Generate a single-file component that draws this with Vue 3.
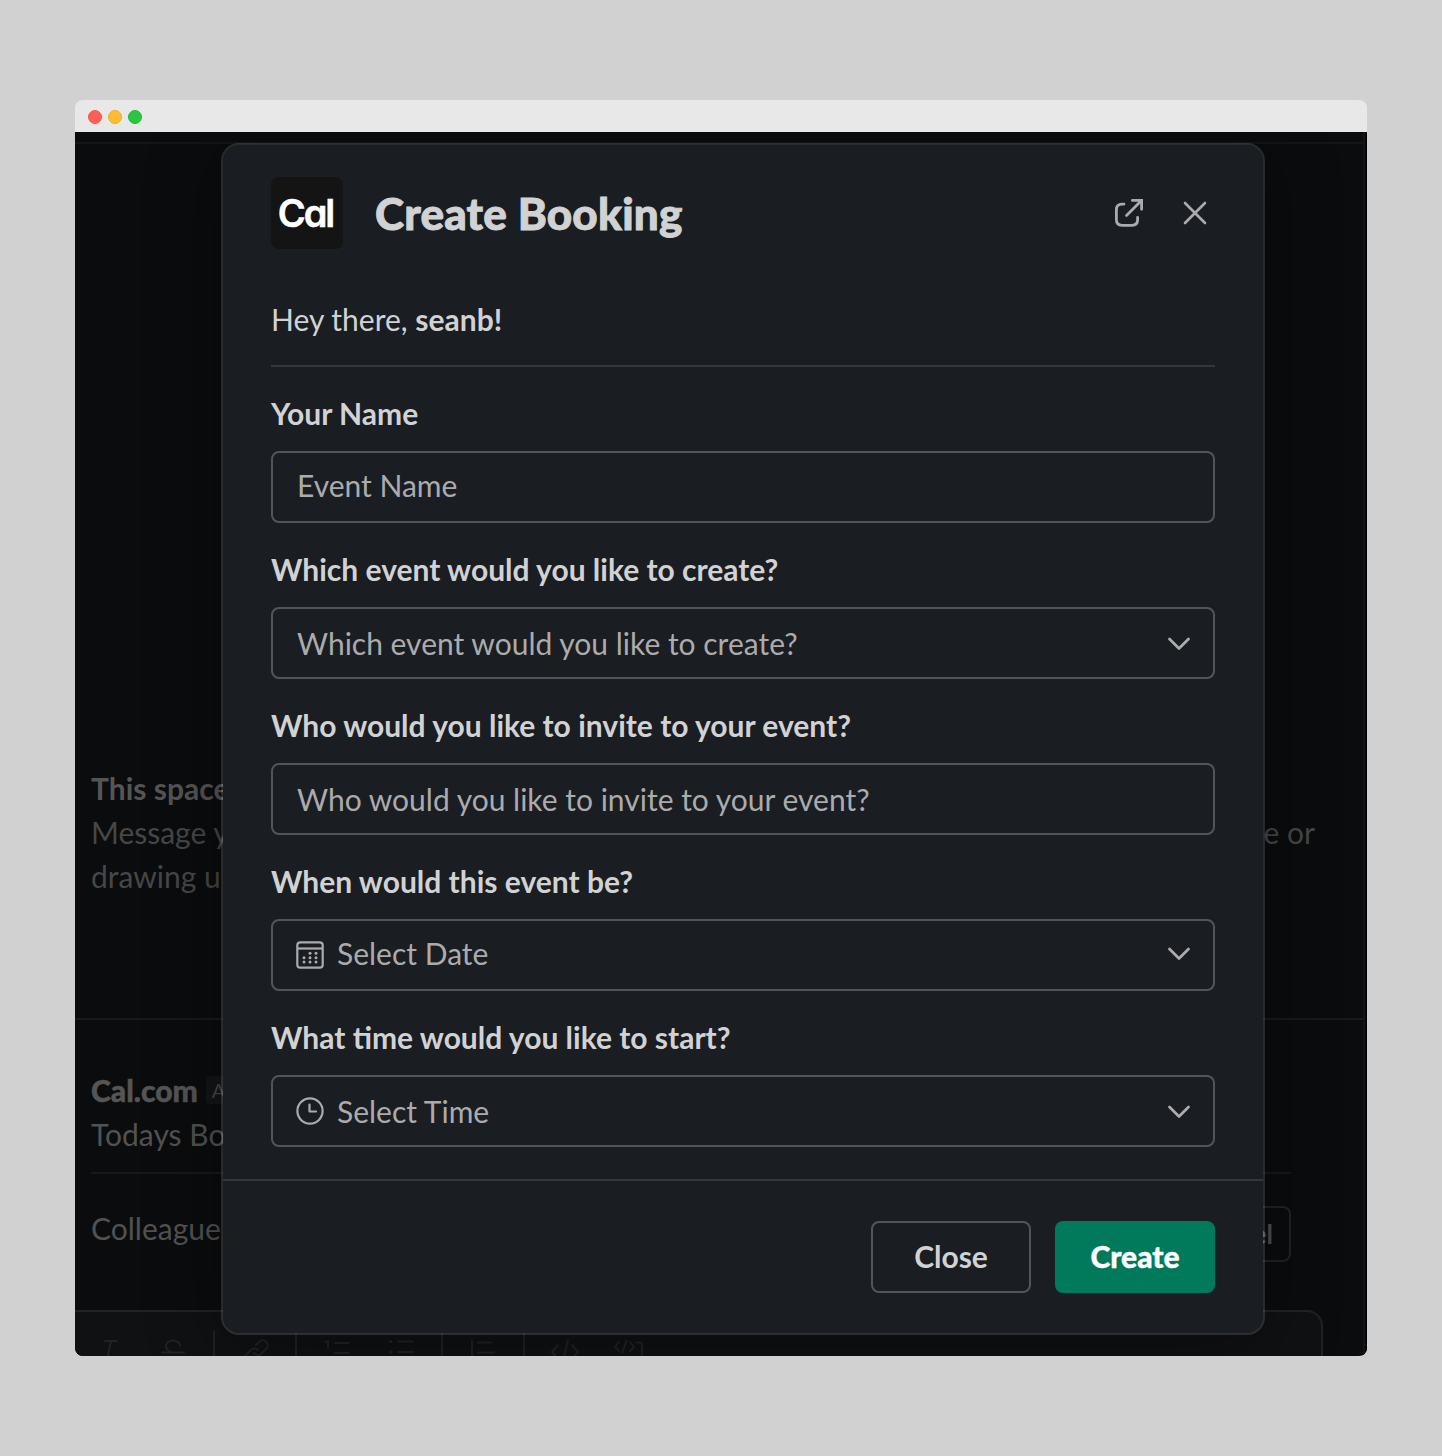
<script setup>
const fields = [
  { label: 'Your Name', placeholder: 'Event Name' },
  { label: 'Which event would you like to create?', placeholder: 'Which event would you like to create?', select: true, low: true },
  { label: 'Who would you like to invite to your event?', placeholder: 'Who would you like to invite to your event?', low: true },
  { label: 'When would this event be?', placeholder: 'Select Date', icon: 'date', select: true },
  { label: 'What time would you like to start?', placeholder: 'Select Time', icon: 'time', select: true, low: true },
]
const dots = [[14, 12.3], [20, 12.3], [8, 16.7], [14, 16.7], [20, 16.7], [8, 21], [14, 21], [20, 21]]
</script>

<template>
  <div class="desktop">
    <div class="window">
      <div class="titlebar"><i class="red"></i><i class="yellow"></i><i class="green"></i></div>
      <div class="app">
        <div class="pane">
          <div class="strip"></div>
          <div class="intro">
            <p class="strong">This space</p>
            <div class="split"><span>Message y</span><span>e or</span></div>
            <p>drawing u</p>
          </div>
          <div class="message">
            <div class="author"><span>Cal.com</span><em>A</em></div>
            <p class="today">Todays Bo</p>
            <div class="booking"><span>Colleague</span><div class="cancel">el</div></div>
          </div>
          <div class="composer">
            <svg width="620" height="44" viewBox="0 0 620 44" fill="none" stroke="#212224" stroke-width="2" stroke-linecap="round" stroke-linejoin="round">
              <path d="M30 29h12M36 29l-4 19" />
              <path d="M87 40.500h22M105 34c0-3-3-5.500-7-5.500s-7 2.500-7 6c0 3 2 4 5 6" />
              <path d="M139 19v30M221 19v30M367 19v30M449 19v30" />
              <path d="M181 33l3-3c5-5 12 2 7 7l-4 4c-3 3-5 3-8 0M183 38c-2-2-5-2-7 0l-5 5c-3 3-2 6 0 8" />
              <path d="M250 30l3-1v6M260 31h14M260 41h14M323 29.500h15M323 40h15M403 30.500h13M403 40.500h16M397 29v18" />
              <path d="M315.500 29.500h.5M315.500 40h.5" stroke-width="3" />
              <path d="M483 33l-6 7 6 7M493 28.500l-5 20M497 33l6 7-6 7" />
              <path d="M544 30l-4 5 4 4M551.500 28.500l-4 12M555 30l4 5-4 4M561 30.500h3q3 0 3 3v12" />
            </svg>
          </div>
        </div>
        <div class="edge"></div>

        <div class="modal">
          <header>
            <div class="logo"><span>Cal</span></div>
            <h1>Create Booking</h1>
            <svg class="open" width="34" height="32" viewBox="0 0 34 32" fill="none" stroke="#ababad" stroke-width="2.8" stroke-linecap="round" stroke-linejoin="miter">
              <path d="M13 8.100H11Q5.400 8.100 5.400 13.500v10.300q0 5.500 5.600 5.500h10q5.600 0 5.600-5.500v-2.400M15.500 19.500L30 5M21.400 4.400h9.200v8.900" />
            </svg>
            <svg class="close" width="28" height="28" viewBox="0 0 28 28" fill="none" stroke="#ababad" stroke-width="2.600" stroke-linecap="round">
              <path d="M4 4l20 20M24 4L4 24" />
            </svg>
          </header>
          <div class="body">
            <p class="greeting">Hey there, <b>seanb!</b></p>
            <section v-for="f in fields" :key="f.label">
              <label>{{ f.label }}</label>
              <div class="field">
                <svg v-if="f.icon === 'date'" class="icon" width="28" height="28" viewBox="0 0 28 28" fill="none" stroke="#ababad" stroke-width="2.200">
                  <rect x="1.300" y="1.300" width="25.400" height="25.400" rx="3" /><path d="M1 7.500h26" />
                  <circle v-for="d in dots" :key="d.join()" :cx="d[0]" :cy="d[1]" r="1.500" fill="#ababad" stroke="none" />
                </svg>
                <svg v-if="f.icon === 'time'" class="icon" width="28" height="28" viewBox="0 0 28 28" fill="none" stroke="#ababad" stroke-width="2.200" stroke-linecap="round" stroke-linejoin="round">
                  <circle cx="14" cy="14" r="12.600" /><path d="M13.500 7.500v7H20" />
                </svg>
                <span class="placeholder" :class="{ low: f.low }">{{ f.placeholder }}</span>
                <svg v-if="f.select" class="chevron" :class="{ high: f.icon === 'date' }" width="24" height="16" viewBox="0 0 24 16" fill="none" stroke="#ababad" stroke-width="2.800" stroke-linecap="round" stroke-linejoin="round">
                  <path d="M2.500 3L12 12.500 21.500 3" />
                </svg>
              </div>
            </section>
          </div>
          <footer>
            <button class="plain">Close</button>
            <button class="primary">Create</button>
          </footer>
        </div>
      </div>
    </div>
  </div>
</template>

<style>
body { margin: 0; background: #d1d1d1; }
</style>

<style scoped>
* { box-sizing: border-box; }
p, h1 { margin: 0; }
svg { display: block; flex: none; }
.desktop { height: 1456px; padding: 100px 75px; background: #d1d1d1; font: 400 30px/44px Lato, sans-serif; }
.window { width: 1292px; height: 1256px; border-radius: 8px; overflow: hidden; }
.titlebar { height: 32px; background: #e8e8e8; display: flex; align-items: center; gap: 6px; padding: 2px 13px 0; }
.titlebar i { width: 14px; height: 14px; border-radius: 50%; border: 1px solid; }
.titlebar .red { background: #ff5f57; border-color: #f2564e; }
.titlebar .yellow { background: #febc2e; border-color: #efae2b; }
.titlebar .green { background: #28c840; border-color: #22b83a; }
.app { position: relative; overflow: hidden; display: flex; height: 1224px; background: #0b0c0e; color: #525253; white-space: nowrap; }
.pane { width: 1288px; display: flex; flex-direction: column; }
.edge { width: 4px; border-left: 2px solid #141517; background: #050607; }
.strip { height: 12px; flex: none; border-bottom: 2px solid #151618; }
.intro { height: 876px; flex: none; padding: 622px 48px 0 16px; border-bottom: 2px solid #191a1c; color: #464747; }
.intro .strong { font-weight: 700; color: #555556; }
.split { display: flex; justify-content: space-between; }
.message { height: 290px; flex: none; padding: 48px 72px 0 16px; }
.author { display: flex; align-items: center; gap: 8px; font-weight: 900; color: #555556; -webkit-text-stroke: .5px; }
.author em { font: 400 20px/28px Lato, sans-serif; background: #141517; color: #464747; padding: 0 8px 0 6px; border-radius: 4px; -webkit-text-stroke: 0; }
.today { height: 62px; border-bottom: 2px solid #18191b; margin-bottom: 32px; }
.booking { display: flex; justify-content: space-between; align-items: flex-start; line-height: 44px; }
.cancel { width: 112px; height: 56px; border: 2px solid #222325; border-radius: 8px; padding: 0 16px; font-size: 26px; line-height: 52px; font-weight: 700; text-align: right; }
.composer { width: 1248px; flex: 1; min-height: 0; overflow: hidden; border: 2px solid #222325; border-width: 2px 2px 0 0; border-radius: 0 16px 0 0; background: #101113; }
.modal { position: absolute; left: 146px; top: 11px; width: 1044px; height: 1192px; border: 2px solid rgba(255, 255, 255, .13); border-radius: 18px; background: #1a1d21; background-clip: padding-box; box-shadow: 0 8px 72px rgba(0, 0, 0, .4); color: #d1d2d3; display: flex; flex-direction: column; }
header { height: 136px; padding: 32px 54px 0 48px; display: flex; align-items: flex-start; }
.logo { width: 72px; height: 72px; flex: none; border-radius: 8px; background: #141414; display: flex; justify-content: center; }
.logo span { font: 600 38px/72px Inter, sans-serif; font-feature-settings: "cv11"; letter-spacing: -2px; color: #fff; margin-left: -3px; -webkit-text-stroke: .5px; }
h1 { flex: 1; margin-left: 32px; font-size: 44px; line-height: 72px; font-weight: 900; letter-spacing: .2px; -webkit-text-stroke: .9px; }
.open { margin: 19px 36px 0 0; }
.close { margin-top: 22px; }
.body { padding: 0 48px; flex: 1; }
.greeting { height: 86px; padding-top: 16px; border-bottom: 2px solid #35373b; }
.greeting b { font-weight: 700; }
section { height: 156px; }
label { display: block; height: 84px; line-height: 44px; padding-top: 24px; font-weight: 700; }
.field { height: 72px; border: 2px solid #535558; border-radius: 8px; padding: 0 22px 0 24px; display: flex; align-items: center; color: #ababad; }
.icon { margin: 0 13px 1px -1px; }
.placeholder { flex: 1; line-height: 44px; padding-bottom: 4px; }
.placeholder.low { padding: 0; }
.chevron { margin-top: 2px; }
.chevron.high { margin-top: -2px; }
footer { height: 154px; border-top: 2px solid #35373b; padding: 40px 48px 0; display: flex; justify-content: flex-end; gap: 24px; }
button { width: 160px; height: 72px; border-radius: 8px; padding: 0 0 2px; font: 700 30px/44px Lato, sans-serif; }
.plain { background: none; border: 2px solid #535558; color: #d1d2d3; }
.primary { background: #007a5a; border: 0; color: #fff; font-weight: 900; -webkit-text-stroke: .4px; }
</style>
